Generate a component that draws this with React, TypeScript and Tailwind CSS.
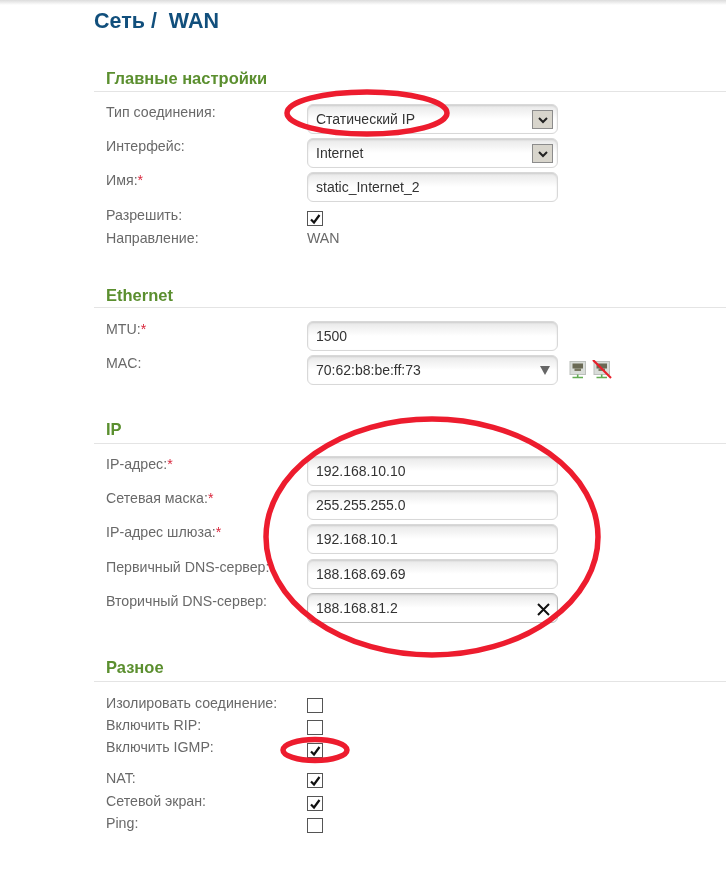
const labelClass = 'w-[201px] shrink-0 text-[14.2px] leading-[16px] text-[#696969]';

function Field({ value, dark, children }: { value: string; dark?: boolean; children?: React.ReactNode }) {
  return (
    <div
      className={`relative flex h-[30px] w-[251px] items-center rounded-[6px] border bg-gradient-to-b from-[#e8e8e8] via-white to-white pl-[8px] text-[14px] text-[#333333] shadow-[inset_0_1px_2px_rgba(0,0,0,0.12)] ${
        dark ? 'border-[#bdbdbd]' : 'border-[#d8d8d8]'
      }`}
    >
      <span>{value}</span>
      {children}
    </div>
  );
}

function Row({ label, required, className, children }: { label: string; required?: boolean; className?: string; children: React.ReactNode }) {
  return (
    <div className={`flex ${className ?? ''}`}>
      <div className={labelClass}>
        {label}
        {required && <span className="text-[#d9263c]">*</span>}
      </div>
      {children}
    </div>
  );
}

function SelectArrow() {
  return (
    <span className="absolute right-[4px] top-[5px] flex h-[19px] w-[21px] items-center justify-center border border-[#8c8c8c] bg-[#d8d5cc]">
      <svg className="h-[10px] w-[12px]" viewBox="0 0 12 10" fill="none" stroke="#222222" strokeWidth={2}>
        <path d="M2 3l4 4 4-4" />
      </svg>
    </span>
  );
}

function Check({ checked }: { checked?: boolean }) {
  return (
    <span className="flex h-[15px] w-[16px] items-center justify-center border border-[#555555] bg-white">
      {checked && (
        <svg className="h-[12px] w-[12px]" viewBox="0 0 12 12" fill="none" stroke="#111111" strokeWidth={2.2}>
          <path d="M2 6.5l3 3 5.5-7.5" />
        </svg>
      )}
    </span>
  );
}

function Heading({ title, className }: { title: string; className?: string }) {
  return (
    <div className={`border-b border-[#e4e4e4] pl-[12px] text-[16.5px] font-bold leading-[16px] text-[#5b8f2f] ${className ?? ''}`}>
      {title}
    </div>
  );
}

function LanIcon({ crossed }: { crossed?: boolean }) {
  return (
    <svg className="h-[20px] w-[20px]" viewBox="0 0 20 20">
      <rect x="2" y="1.5" width="15.5" height="13" fill="#d9ddd9" stroke="#bcc0bc" />
      <rect x="4.5" y="3.5" width="10.5" height="5" fill="#6a6a55" />
      <rect x="6.5" y="8.5" width="6.5" height="2.5" fill="#77775f" />
      <path d="M9.7 14.5v3M4.5 17.5h10.5" stroke="#62ac52" strokeWidth={1.6} />
      {crossed && <path d="M1 0l18 18" stroke="#e8202c" strokeWidth={2.2} />}
    </svg>
  );
}

export default function App() {
  return (
    <div className="relative h-[872px] w-[726px] overflow-hidden bg-white font-['Liberation_Sans',Arial,sans-serif] blur-[0.35px]">
      <div className="h-[5px] bg-gradient-to-b from-[#dcdcdc] to-white" />

      <div className="pl-[94px]">
        <h1 className="mt-[5px] text-[21.5px] font-bold leading-[23px] text-[#114f7c]">
          Сеть /&nbsp; WAN
        </h1>

        <Heading title="Главные настройки" className="mt-[37px] h-[22px]" />
        <div className="pl-[12px]">
          <Row label="Тип соединения:" className="mt-[12px] h-[30px]">
            <Field value="Статический IP"><SelectArrow /></Field>
          </Row>
          <Row label="Интерфейс:" className="mt-[4px] h-[30px]">
            <Field value="Internet"><SelectArrow /></Field>
          </Row>
          <Row label="Имя:" required className="mt-[4px] h-[30px]">
            <Field value="static_Internet_2" />
          </Row>
          <Row label="Разрешить:" className="mt-[5px] h-[19px]">
            <div className="pt-[4px]"><Check checked /></div>
          </Row>
          <Row label="Направление:" className="mt-[4px] h-[16px]">
            <span className="text-[14.2px] leading-[16px] text-[#696969]">WAN</span>
          </Row>
        </div>

        <Heading title="Ethernet" className="mt-[41px] h-[21px]" />
        <div className="pl-[12px]">
          <Row label="MTU:" required className="mt-[13px] h-[30px]">
            <Field value="1500" />
          </Row>
          <Row label="MAC:" className="mt-[4px] h-[30px]">
            <Field value="70:62:b8:be:ff:73">
              <span className="absolute right-[7px] top-[10px] h-0 w-0 border-x-[5px] border-t-[9px] border-x-transparent border-t-[#666666]" />
            </Field>
            <div className="ml-[10px] mt-[5px] flex gap-[4px]">
              <LanIcon />
              <LanIcon crossed />
            </div>
          </Row>
        </div>

        <Heading title="IP" className="mt-[36px] h-[23px]" />
        <div className="pl-[12px]">
          <Row label="IP-адрес:" required className="mt-[12px] h-[30px]">
            <Field value="192.168.10.10" />
          </Row>
          <Row label="Сетевая маска:" required className="mt-[4px] h-[30px]">
            <Field value="255.255.255.0" />
          </Row>
          <Row label="IP-адрес шлюза:" required className="mt-[4px] h-[30px]">
            <Field value="192.168.10.1" />
          </Row>
          <Row label="Первичный DNS-сервер:" className="mt-[5px] h-[30px]">
            <Field value="188.168.69.69" />
          </Row>
          <Row label="Вторичный DNS-сервер:" className="mt-[4px] h-[30px]">
            <Field value="188.168.81.2" dark>
              <svg className="absolute right-[7px] top-[9px] h-[13px] w-[13px]" viewBox="0 0 13 13" stroke="#111111" strokeWidth={2}>
                <path d="M1 1l11 11M12 1L1 12" />
              </svg>
            </Field>
          </Row>
        </div>

        <Heading title="Разное" className="mt-[36px] h-[23px]" />
        <div className="pl-[12px]">
          <Row label="Изолировать соединение:" className="mt-[13px] h-[22px]">
            <div className="pt-[3px]"><Check /></div>
          </Row>
          <Row label="Включить RIP:" className="h-[22px]">
            <div className="pt-[3px]"><Check /></div>
          </Row>
          <Row label="Включить IGMP:" className="h-[22px]">
            <div className="pt-[4px]"><Check checked /></div>
          </Row>
          <Row label="NAT:" className="mt-[9px] h-[23px]">
            <div className="pt-[3px]"><Check checked /></div>
          </Row>
          <Row label="Сетевой экран:" className="h-[22px]">
            <div className="pt-[3px]"><Check checked /></div>
          </Row>
          <Row label="Ping:" className="h-[22px]">
            <div className="pt-[3px]"><Check /></div>
          </Row>
        </div>
      </div>

      {/* red marker circles drawn over the screenshot */}
      <svg className="pointer-events-none absolute left-0 top-0 h-[872px] w-[726px]" viewBox="0 0 726 872" fill="none" stroke="#ed1c2e" strokeWidth={5.5}>
        <ellipse cx="367" cy="113" rx="80" ry="21" />
        <ellipse cx="432" cy="537" rx="166" ry="118" />
        <ellipse cx="315" cy="750" rx="32" ry="10.5" />
      </svg>
    </div>
  );
}
